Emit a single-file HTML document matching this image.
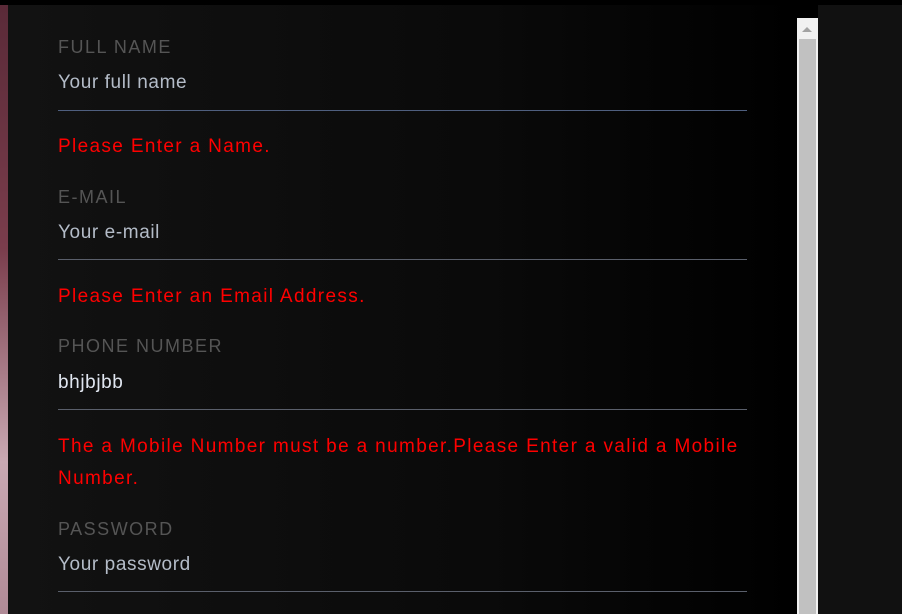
<!DOCTYPE html>
<html><head><meta charset="utf-8"><style>
html,body{margin:0;padding:0;width:902px;height:614px;overflow:hidden;background:#000;font-family:"Liberation Sans",sans-serif;}
.left{position:absolute;left:0;top:5px;width:8px;height:609px;background:linear-gradient(180deg,#5a2a38,#7a3d4c 40%,#c9a9b3 75%,#b08a96);}
.panel{position:absolute;left:8px;top:5px;width:789px;height:609px;background:linear-gradient(90deg,#121212,#0a0a0a 60%,#000);}
.right{position:absolute;left:818px;top:5px;width:84px;height:609px;background:#111;}
.sb{position:absolute;left:797px;top:18px;width:21px;height:596px;background:#f1f1f1;}
.thumb{position:absolute;left:799px;top:39px;width:17px;height:575px;background:#c1c1c1;}
.arrow{position:absolute;left:802px;top:27px;width:0;height:0;border-left:5px solid transparent;border-right:5px solid transparent;border-bottom:5px solid #a3a3a3;}
.t{position:absolute;left:58px;white-space:nowrap;}
.lab{color:#555;font-size:18px;letter-spacing:1.5px;}
.val{color:#b4bcc8;font-size:19px;font-weight:300;letter-spacing:0.6px;}
.err{color:#ff0000;font-size:19px;letter-spacing:1.35px;}
.line{position:absolute;left:58px;width:689px;height:1px;background:#5a5f6b;}
</style></head><body>
<div class="left"></div>
<div class="panel"></div>
<div class="right"></div>
<div class="sb"></div><div class="thumb"></div><div class="arrow"></div>

<div class="t lab" style="top:37px">FULL NAME</div>
<div class="t val" style="top:72px">Your full name</div>
<div class="line" style="top:110px;background:#4f5f7f"></div>
<div class="t err" style="top:136px">Please Enter a Name.</div>

<div class="t lab" style="top:187px">E-MAIL</div>
<div class="t val" style="top:222px">Your e-mail</div>
<div class="line" style="top:259px"></div>
<div class="t err" style="top:286px">Please Enter an Email Address.</div>

<div class="t lab" style="top:336px">PHONE NUMBER</div>
<div class="t val" style="top:372px;color:#e0e6f0">bhjbjbb</div>
<div class="line" style="top:409px"></div>
<div class="t err" style="top:436px">The a Mobile Number must be a number.Please Enter a valid a Mobile</div>
<div class="t err" style="top:468px">Number.</div>

<div class="t lab" style="top:519px">PASSWORD</div>
<div class="t val" style="top:554px">Your password</div>
<div class="line" style="top:591px"></div>
</body></html>
